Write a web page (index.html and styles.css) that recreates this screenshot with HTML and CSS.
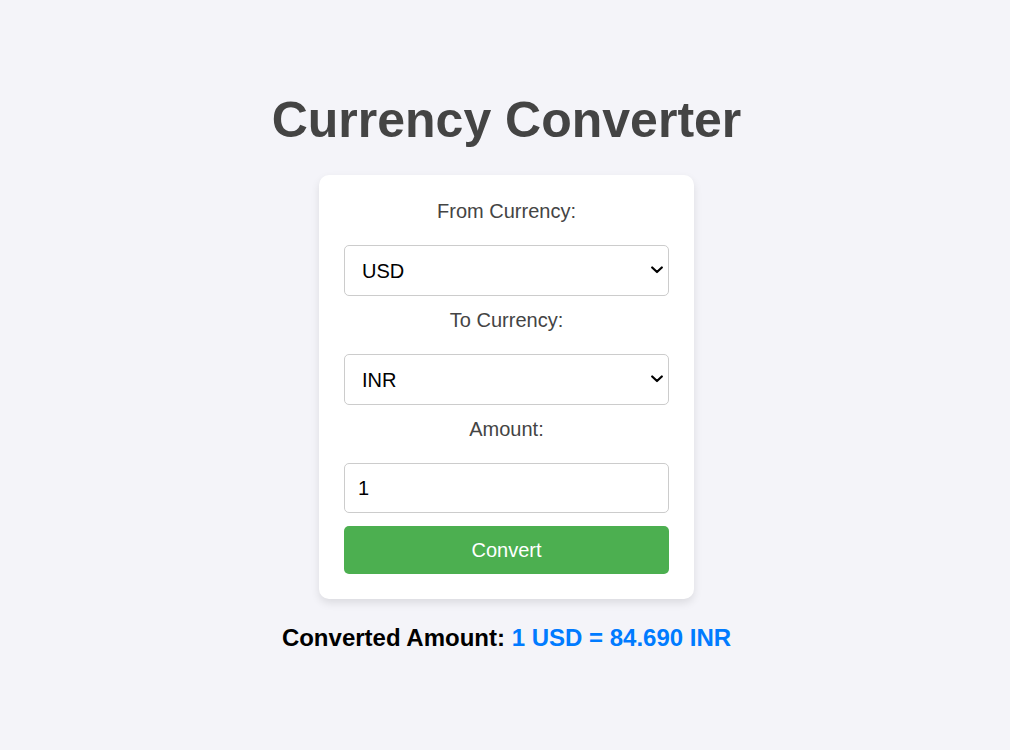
FILE: index.html
```html
<!DOCTYPE html>
<html lang="en">
<head>
<meta charset="UTF-8">
<title>Currency Converter</title>
<link rel="stylesheet" href="styles.css">
</head>
<body>
<main class="page">
  <h1 class="title">Currency Converter</h1>
  <form class="card">
    <label class="field-label" for="from">From Currency:</label>
    <div class="select-wrap">
      <select id="from" class="control select">
        <option>USD</option>
      </select>
      <svg class="chevron" width="12" height="8" viewBox="0 0 12 8" aria-hidden="true"><path d="M1.2 1.5 L6 6 L10.8 1.5" fill="none" stroke="#000" stroke-width="2.2" stroke-linecap="round" stroke-linejoin="round"/></svg>
    </div>
    <label class="field-label" for="to">To Currency:</label>
    <div class="select-wrap">
      <select id="to" class="control select">
        <option>INR</option>
      </select>
      <svg class="chevron" width="12" height="8" viewBox="0 0 12 8" aria-hidden="true"><path d="M1.2 1.5 L6 6 L10.8 1.5" fill="none" stroke="#000" stroke-width="2.2" stroke-linecap="round" stroke-linejoin="round"/></svg>
    </div>
    <label class="field-label" for="amount">Amount:</label>
    <input id="amount" class="control input" type="number" value="1">
    <button type="button" class="convert-btn">Convert</button>
  </form>
  <p class="result">Converted Amount: <span class="result-value">1 USD = 84.690 INR</span></p>
</main>
</body>
</html>
```

FILE: styles.css
```css
* { box-sizing: border-box; }

html, body {
  margin: 0;
  padding: 0;
  background: #f4f4f9;
}

body {
  font-family: "Liberation Sans", Arial, sans-serif;
  color: #444;
}

.page {
  display: flex;
  flex-direction: column;
  align-items: center;
  padding-top: 92px;
  padding-left: 3px;
}

.title {
  margin: 0 0 26px;
  font-size: 50px;
  font-weight: bold;
  line-height: 57px;
  color: #444;
}

.card {
  width: 375px;
  background: #fff;
  border-radius: 10px;
  box-shadow: 0 4px 8px rgba(0, 0, 0, 0.1);
  padding: 25px 25px 25px;
  display: flex;
  flex-direction: column;
  align-items: stretch;
}

.field-label {
  display: block;
  text-align: center;
  font-size: 20px;
  line-height: 23px;
  color: #444;
  margin-bottom: 22px;
}

.control {
  width: 100%;
  font-family: "Liberation Sans", Arial, sans-serif;
  font-size: 20px;
  color: #000;
  background: #fff;
  border: 1px solid #ccc;
  border-radius: 5px;
  margin-bottom: 13px;
}

.select-wrap {
  position: relative;
}

.select {
  display: block;
  height: 51px;
  padding: 0 30px 0 17px;
  -webkit-appearance: none;
  appearance: none;
}

.chevron {
  position: absolute;
  right: 6px;
  top: 21px;
  pointer-events: none;
}

.input {
  display: block;
  height: 50px;
  padding: 0 13px;
  -moz-appearance: textfield;
}

.input::-webkit-outer-spin-button,
.input::-webkit-inner-spin-button {
  -webkit-appearance: none;
  margin: 0;
}

.convert-btn {
  height: 48px;
  width: 100%;
  border: none;
  border-radius: 5px;
  background: #4caf50;
  color: #fff;
  font-family: "Liberation Sans", Arial, sans-serif;
  font-size: 20px;
  cursor: pointer;
}

.result {
  margin: 25px 0 0;
  font-size: 24px;
  line-height: 28px;
  font-weight: bold;
  color: #000;
}

.result-value {
  color: #007bff;
}
```
